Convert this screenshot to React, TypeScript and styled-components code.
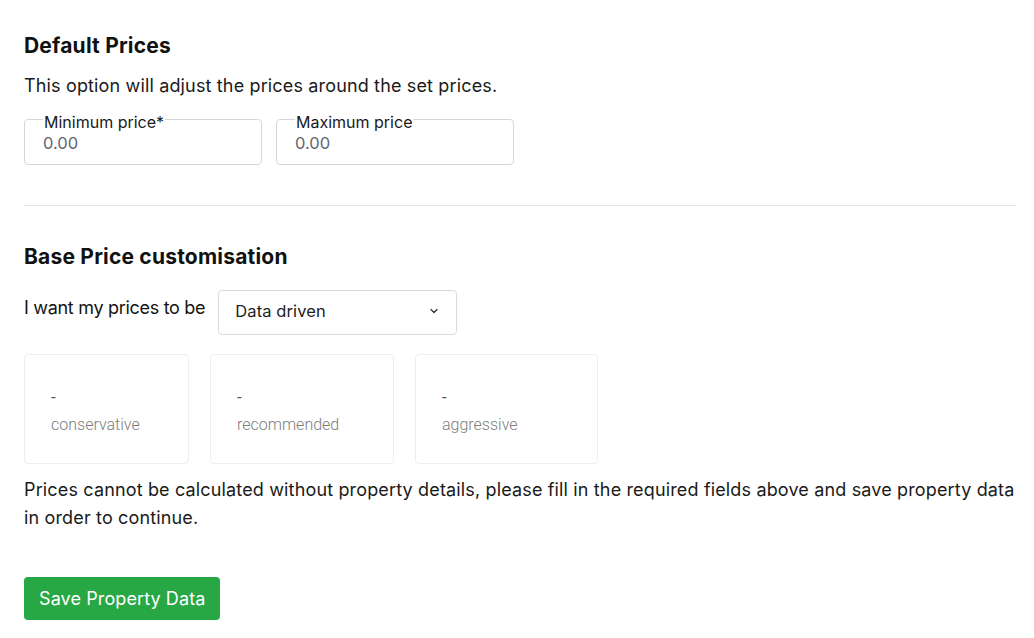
import React from "react";
import styled, { createGlobalStyle } from "styled-components";

const Global = createGlobalStyle`
  html, body { margin: 0; padding: 0; background: #fff; }
  body { font-family: Inter, "Noto Sans", sans-serif; color: #141414; }
  * { box-sizing: border-box; }
`;

const Page = styled.div`
  padding: 30px 18px 18px 24px;
  display: flex;
  flex-direction: column;
`;

const Heading = styled.h2`
  margin: 0;
  font-size: 21px;
  font-weight: 700;
  line-height: 32px;
  color: #111;
  letter-spacing: 0.2px;
`;

const Text = styled.p<{ $mt?: number }>`
  margin: ${(p) => p.$mt ?? 0}px 0 0;
  font-size: 18px;
  line-height: 28px;
  color: #1a1a1a;
  letter-spacing: 0.15px;
`;

const InputRow = styled.div`
  display: flex;
  gap: 14px;
  margin-top: 14px;
`;

const Field = styled.fieldset`
  width: 238px;
  height: 51px;
  margin: 0;
  padding: 0 18px 0 18px;
  border: 1px solid #d4d6da;
  border-radius: 4px;
  display: flex;
  flex-direction: column;
`;

const Legend = styled.legend`
  position: relative;
  top: 3px;
  padding: 0 1px;
  margin-left: 0;
  font-size: 16px;
  line-height: 10px;
  color: #1a1a1a;
  letter-spacing: 0;
`;

const Value = styled.div`
  font-size: 16.5px;
  line-height: 20px;
  color: #5f6670;
  margin-top: 9px;
`;

const Divider = styled.hr`
  border: none;
  border-top: 1px solid #e4e4e4;
  margin: 40px 0 0;
  width: 100%;
`;

const Section = styled.div`
  margin-top: 35px;
`;

const SelectRow = styled.div`
  display: flex;
  align-items: flex-start;
  gap: 13px;
  margin-top: 17px;
`;

const SelectLabel = styled.span`
  font-size: 18px;
  line-height: 22px;
  margin-top: 7px;
  letter-spacing: -0.3px;
`;

const Select = styled.div`
  width: 239px;
  height: 45px;
  border: 1px solid #d9dbde;
  border-radius: 4px;
  display: flex;
  align-items: center;
  justify-content: space-between;
  padding: 0 16px 4px 16px;
  font-size: 16.5px;
  color: #222;
  letter-spacing: 0.1px;
`;

const Cards = styled.div`
  display: flex;
  gap: 21px;
  margin-top: 19px;
`;

const Card = styled.div<{ $w: number }>`
  width: ${(p) => p.$w}px;
  height: 110px;
  border: 1px solid #eeeeee;
  border-radius: 4px;
  padding: 31px 26px 0;
  font-family: Roboto, "Noto Sans", sans-serif;
  color: #8a8a8a;
`;

const Dash = styled.div`
  font-size: 17px;
  line-height: 22px;
  color: #555;
`;

const CardLabel = styled.div`
  font-size: 16px;
  line-height: 22px;
  margin-top: 6px;
  font-weight: 300;
  color: #7d7d7d;
`;

const Button = styled.button`
  align-self: flex-start;
  margin-top: 45px;
  height: 43px;
  padding: 0 15px;
  background: #28a745;
  border: none;
  border-radius: 4px;
  color: #fff;
  font-family: Inter, "Noto Sans", sans-serif;
  font-size: 18px;
  letter-spacing: 0.1px;
  cursor: pointer;
`;

const Chevron = () => (
  <svg width="12" height="12" viewBox="0 0 24 24" fill="none" stroke="#333" strokeWidth="2.5" strokeLinecap="round" strokeLinejoin="round">
    <path d="M6 9l6 6 6-6" />
  </svg>
);

export default function App() {
  const cards = [
    { label: "conservative", w: 165 },
    { label: "recommended", w: 184 },
    { label: "aggressive", w: 183 },
  ];
  return (
    <>
      <Global />
      <Page>
        <Heading>Default Prices</Heading>
        <Text $mt={10}>This option will adjust the prices around the set prices.</Text>
        <InputRow>
          <Field>
            <Legend>Minimum price*</Legend>
            <Value>0.00</Value>
          </Field>
          <Field>
            <Legend>Maximum price</Legend>
            <Value>0.00</Value>
          </Field>
        </InputRow>
        <Divider />
        <Section>
          <Heading>Base Price customisation</Heading>
          <SelectRow>
            <SelectLabel>I want my prices to be</SelectLabel>
            <Select>
              <span>Data driven</span>
              <Chevron />
            </Select>
          </SelectRow>
          <Cards>
            {cards.map((c) => (
              <Card key={c.label} $w={c.w}>
                <Dash>-</Dash>
                <CardLabel>{c.label}</CardLabel>
              </Card>
            ))}
          </Cards>
          <Text $mt={12}>
            Prices cannot be calculated without property details, please fill in the required fields above and save property data in order to continue.
          </Text>
        </Section>
        <Button>Save Property Data</Button>
      </Page>
    </>
  );
}
